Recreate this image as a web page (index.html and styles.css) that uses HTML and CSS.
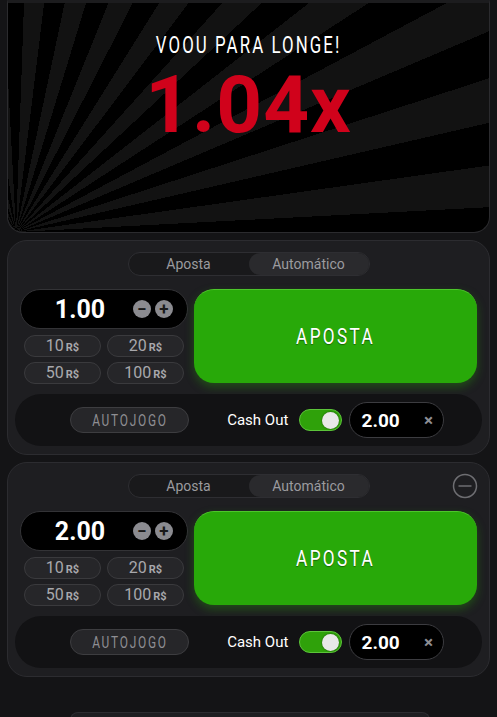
FILE: index.html
```html
<!DOCTYPE html>
<html lang="pt">
<head>
    <meta charset="UTF-8">
    <meta name="viewport" content="width=device-width, initial-scale=1.0">
    <title>Aviator</title>
    <link rel="stylesheet" href="styles.css">
</head>
<body>
    <div class="page">
        <div class="game">
            <div class="flew"><span class="narrow">VOOU PARA LONGE!</span></div>
            <div class="multiplier">1.04x</div>
        </div>

        <div class="bet-panel">
            <div class="panel-head">
                <div class="tabs">
                    <div class="tab">Aposta</div>
                    <div class="tab active">Automático</div>
                </div>
            </div>
            <div class="bet-main">
                <div class="bet-left">
                    <div class="amount">
                        <span class="amount-value">1.00</span>
                        <span class="round-btn">&minus;</span>
                        <span class="round-btn">+</span>
                    </div>
                    <div class="quick">
                        <button type="button">10<small>R$</small></button>
                        <button type="button">20<small>R$</small></button>
                        <button type="button">50<small>R$</small></button>
                        <button type="button">100<small>R$</small></button>
                    </div>
                </div>
                <button type="button" class="bet-button"><span class="narrow">APOSTA</span></button>
            </div>
            <div class="auto-row">
                <button type="button" class="autoplay"><span class="narrow">AUTOJOGO</span></button>
                <span class="cash-label">Cash Out</span>
                <span class="toggle"><span class="knob"></span></span>
                <div class="cash-input">
                    <span>2.00</span>
                    <span class="clear">&times;</span>
                </div>
            </div>
        </div>

        <div class="bet-panel">
            <div class="panel-head">
                <div class="tabs">
                    <div class="tab">Aposta</div>
                    <div class="tab active">Automático</div>
                </div>
                <span class="remove">
                    <svg width="26" height="26" viewBox="0 0 26 26"><circle cx="13" cy="13" r="11.5" fill="none" stroke="#6e6e72" stroke-width="1.5"/><line x1="6.5" y1="13" x2="19.5" y2="13" stroke="#6e6e72" stroke-width="1.5"/></svg>
                </span>
            </div>
            <div class="bet-main">
                <div class="bet-left">
                    <div class="amount">
                        <span class="amount-value">2.00</span>
                        <span class="round-btn">&minus;</span>
                        <span class="round-btn">+</span>
                    </div>
                    <div class="quick">
                        <button type="button">10<small>R$</small></button>
                        <button type="button">20<small>R$</small></button>
                        <button type="button">50<small>R$</small></button>
                        <button type="button">100<small>R$</small></button>
                    </div>
                </div>
                <button type="button" class="bet-button"><span class="narrow">APOSTA</span></button>
            </div>
            <div class="auto-row">
                <button type="button" class="autoplay"><span class="narrow">AUTOJOGO</span></button>
                <span class="cash-label">Cash Out</span>
                <span class="toggle"><span class="knob"></span></span>
                <div class="cash-input">
                    <span>2.00</span>
                    <span class="clear">&times;</span>
                </div>
            </div>
        </div>

        <div class="next-bar"></div>
    </div>
</body>
</html>
```

FILE: styles.css
```css
body {
    margin: 0;
    background: #141416;
    font-family: Roboto, Arial, sans-serif;
    overflow: hidden;
    height: 717px;
}
.page {
    padding: 0 7px;
    display: flex;
    flex-direction: column;
    gap: 7px;
}
.narrow {
    display: inline-block;
    font-family: Roboto, sans-serif;
    white-space: nowrap;
}
.game {
    height: 233px;
    border: 1px solid #2b2b2e;
    border-top: 3px solid #1c1c1e;
    border-radius: 0 0 16px 16px;
    background: repeating-conic-gradient(from -3deg at 8px 100%, #000 0deg 5deg, #121212 5deg 10deg);
    display: flex;
    flex-direction: column;
    align-items: center;
    padding-top: 30px;
    box-sizing: border-box;
}
.flew {
    color: #fff;
    font-size: 24px;
    line-height: 24px;
    height: 24px;
}
.flew .narrow {
    letter-spacing: 3px;
    transform: scaleX(0.7);
}
.multiplier {
    color: #d0021b;
    font-size: 80px;
    font-weight: 700;
    line-height: 94px;
    margin-top: 1px;
    letter-spacing: 1px;
}
.bet-panel {
    background: #1e1e21;
    border: 1px solid #2c2c30;
    border-radius: 20px;
    padding: 11px 7px 8px;
    display: flex;
    flex-direction: column;
    height: 215px;
    box-sizing: border-box;
}
.panel-head {
    display: flex;
    justify-content: center;
    position: relative;
}
.tabs {
    display: flex;
    width: 242px;
    height: 24px;
    border: 1px solid #2e2e32;
    border-radius: 13px;
    background: #19191b;
    box-sizing: border-box;
}
.tab {
    flex: 1;
    text-align: center;
    color: #9b9b9f;
    font-size: 14px;
    line-height: 22px;
    border-radius: 12px;
}
.tab.active {
    background: #2a2a2d;
}
.remove {
    position: absolute;
    right: 4px;
    top: -1px;
    display: flex;
}
.bet-main {
    display: flex;
    gap: 6px;
    margin: 13px 5px 0 5px;
}
.bet-left {
    width: 168px;
    display: flex;
    flex-direction: column;
    gap: 6px;
}
.amount {
    height: 40px;
    background: #000;
    border: 1px solid #333336;
    border-radius: 20px;
    display: flex;
    align-items: center;
    padding: 0 14px 0 0;
    box-sizing: border-box;
    gap: 4px;
}
.amount-value {
    flex: 1;
    text-align: center;
    color: #fff;
    font-size: 25px;
    font-weight: 700;
    padding-left: 10px;
}
.round-btn {
    width: 18px;
    height: 18px;
    border-radius: 50%;
    background: #8b8b90;
    color: #1a1a1a;
    font-size: 17px;
    font-weight: 700;
    line-height: 18px;
    text-align: center;
}
.quick {
    display: grid;
    grid-template-columns: 1fr 1fr;
    gap: 5px 6px;
    padding: 0 4px;
}
.quick button {
    height: 22px;
    background: #262629;
    border: 1px solid #3a3a3d;
    border-radius: 11px;
    color: #a8a8ac;
    font-family: Roboto, sans-serif;
    font-size: 16px;
    padding: 0;
    line-height: 20px;
}
.quick small {
    font-size: 11px;
    font-weight: 700;
    margin-left: 2px;
}
.bet-button {
    flex: 1;
    height: 94px;
    background: #28a909;
    border: none;
    border-top: 1px solid #4dc62b;
    border-radius: 20px;
    color: #fff;
    font-size: 22px;
    text-shadow: 0 1px 1px rgba(0, 0, 0, 0.4);
    box-shadow: 0 4px 10px rgba(40, 169, 9, 0.35);
}
.bet-button .narrow {
    letter-spacing: 3px;
    transform: scaleX(0.78);
}
.auto-row {
    margin-top: auto;
    height: 52px;
    background: #121214;
    border-radius: 26px;
    display: flex;
    align-items: center;
    padding: 0 38px 0 55px;
    box-sizing: border-box;
}
.autoplay {
    width: 120px;
    height: 26px;
    background: #262629;
    border: 1px solid #3d3d40;
    border-radius: 13px;
    color: #8e8e93;
    font-size: 17px;
    padding: 0;
}
.autoplay .narrow {
    letter-spacing: 2.5px;
    transform: scaleX(0.7);
}
.cash-label {
    color: #fff;
    font-size: 15px;
    margin-left: 38px;
    width: 62px;
}
.toggle {
    width: 43px;
    height: 22px;
    margin-left: 10px;
    background: #2fa10a;
    border: 1px solid #5cc43a;
    border-radius: 12px;
    box-sizing: border-box;
    display: flex;
    align-items: center;
    justify-content: flex-end;
    padding-right: 2px;
}
.knob {
    width: 17px;
    height: 17px;
    border-radius: 50%;
    background: #e8e8e8;
    box-shadow: 0 0 2px rgba(0, 0, 0, 0.5);
}
.cash-input {
    width: 96px;
    height: 36px;
    margin-left: 7px;
    background: #000;
    border: 1px solid #3c3c40;
    border-radius: 18px;
    box-sizing: border-box;
    display: flex;
    align-items: center;
    padding: 0 10px 0 12px;
    color: #fff;
    font-size: 19px;
    font-weight: 700;
}
.cash-input span:first-child {
    flex: 1;
}
.clear {
    color: #8e8e93;
    font-size: 17px;
}
.next-bar {
    margin: 28px 0 0 63px;
    width: 358px;
    height: 10px;
    border: 1px solid #2c2c30;
    border-bottom: none;
    border-radius: 8px 8px 0 0;
    background: #1e1e21;
}
```
